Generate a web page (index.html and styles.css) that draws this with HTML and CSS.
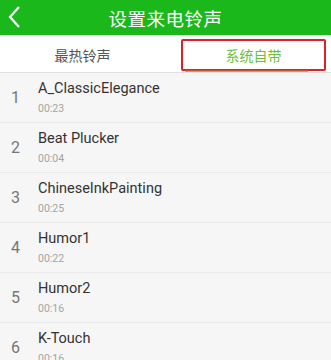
FILE: index.html
```html
<!DOCTYPE html>
<html>
<head>
<meta charset="utf-8">
<link rel="stylesheet" href="styles.css">
</head>
<body>
<div class="header">
  <svg class="back" width="14" height="24" viewBox="0 0 14 24"><path d="M11 2 L2 12 L11 22" fill="none" stroke="#fff" stroke-width="2.2"/></svg>
  <div class="title">设置来电铃声</div>
</div>
<div class="tabs">
  <div class="tab">最热铃声</div>
  <div class="tab active"><span class="indicator"></span>系统自带</div>
</div>
<div class="list">
  <div class="row"><div class="num">1</div><div class="info"><div class="name">A_ClassicElegance</div><div class="dur">00:23</div></div></div>
  <div class="row"><div class="num">2</div><div class="info"><div class="name">Beat Plucker</div><div class="dur">00:04</div></div></div>
  <div class="row"><div class="num">3</div><div class="info"><div class="name">ChineseInkPainting</div><div class="dur">00:25</div></div></div>
  <div class="row"><div class="num">4</div><div class="info"><div class="name">Humor1</div><div class="dur">00:22</div></div></div>
  <div class="row"><div class="num">5</div><div class="info"><div class="name">Humor2</div><div class="dur">00:16</div></div></div>
  <div class="row"><div class="num">6</div><div class="info"><div class="name">K-Touch</div><div class="dur">00:16</div></div></div>
</div>
</body>
</html>
```
FILE: styles.css
```css
html, body { margin: 0; padding: 0; }
body {
  width: 331px; height: 360px; overflow: hidden;
  background: #f6f6f6;
  font-family: Roboto, "Noto Sans CJK SC", sans-serif;
}
.header {
  height: 35px; background: #1bb81b;
  display: flex; align-items: center; justify-content: center;
  position: relative;
}
.back { position: absolute; left: 8px; top: 5px; }
.title { color: #fff; font-size: 18.5px; font-family: "Noto Sans CJK SC", sans-serif; letter-spacing: 0.5px; }
.tabs {
  height: 37px; background: #fff; display: flex;
  border-bottom: 1px solid #e2e2e2;
}
.tab {
  width: 165px; display: flex; align-items: center; justify-content: center;
  font-family: "Noto Sans CJK SC", sans-serif; font-size: 14px; color: #555;
  padding-top: 2px; flex: none;
}
.tab.active {
  width: 145px; box-sizing: border-box;
  color: #6bbf3c; position: relative;
  margin: 4px 0 1px 16px; border: 2px solid #d8232a; border-radius: 2px; padding-top: 0;
}
.indicator {
  position: absolute; left: 2px; right: 16px; bottom: -3px; height: 2px; background: #c8663a; opacity: 0.7;
}
.list { display: flex; flex-direction: column; }
.row {
  height: 49px; display: flex; align-items: center;
  border-bottom: 1px solid #ebebeb;
}
.num { width: 38px; padding-left: 11px; box-sizing: border-box; font-size: 16px; color: #777; flex: none; }
.info { display: flex; flex-direction: column; padding-top: 1px; }
.name { font-size: 14.5px; color: #333; line-height: 20px; }
.dur { font-size: 10.5px; color: #a4a4a4; line-height: 16px; margin-top: 2px; }
```
